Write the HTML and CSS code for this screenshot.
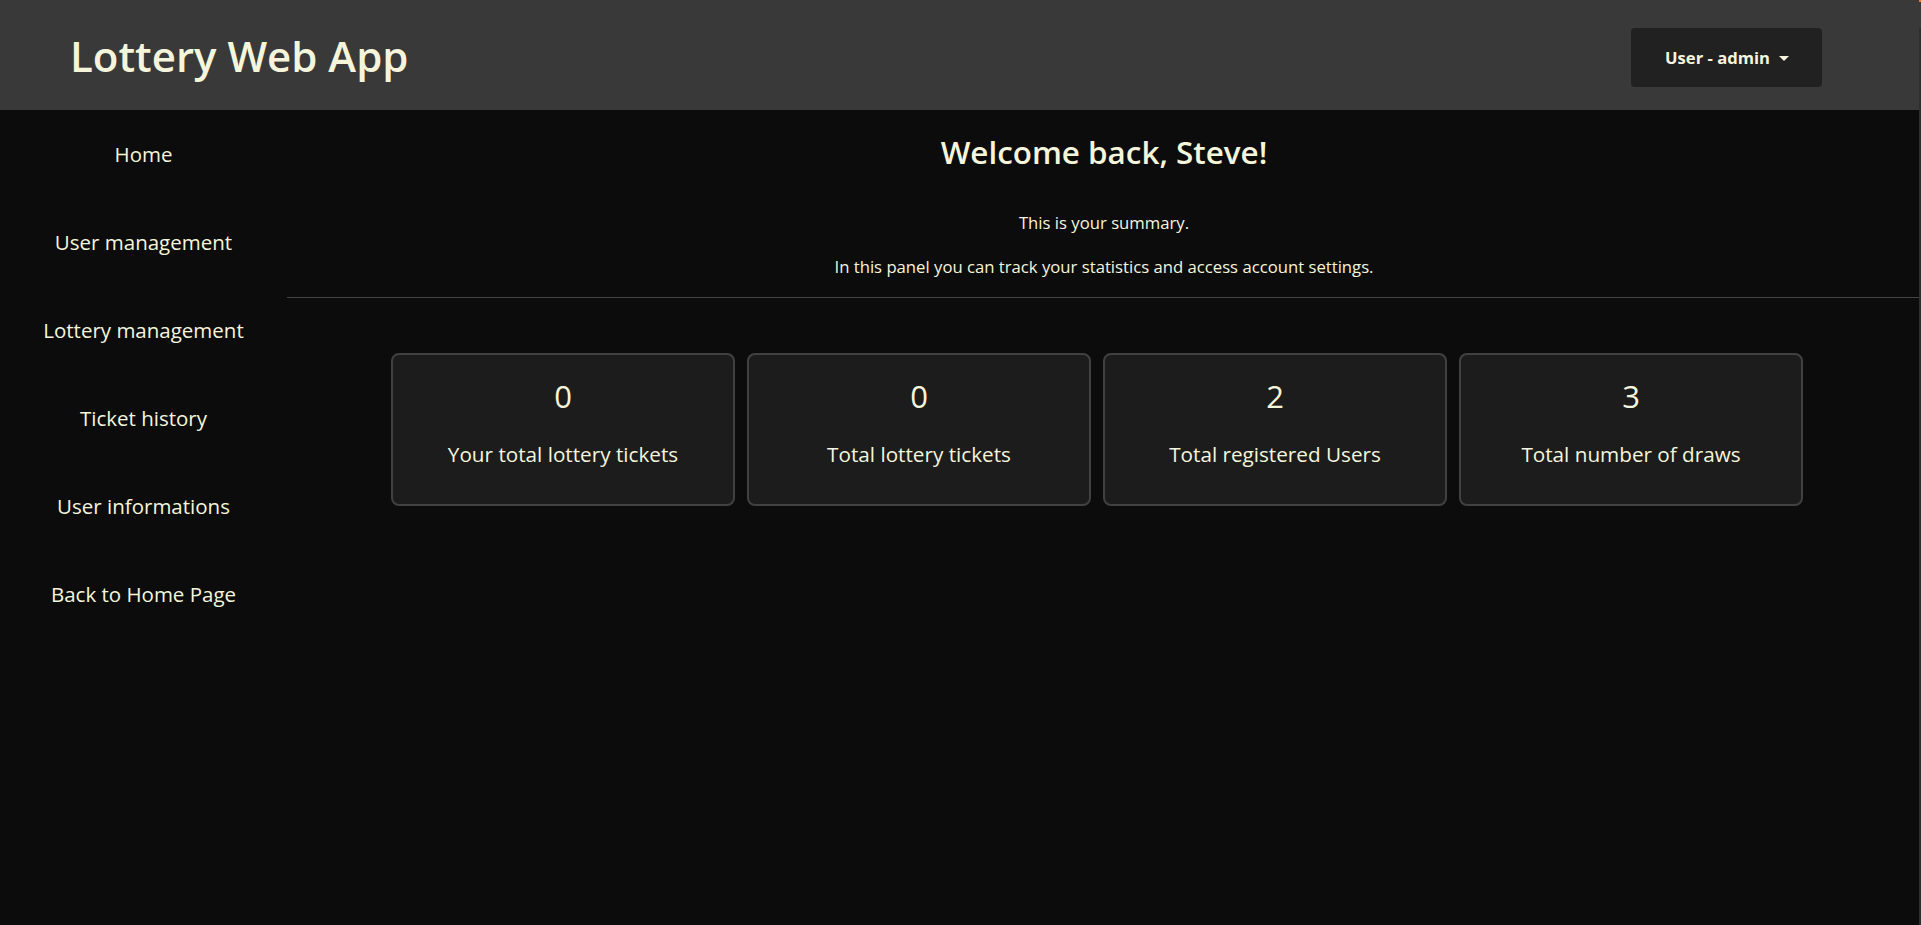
FILE: index.html
```html
<!DOCTYPE html>
<html lang="en">
<head>
<meta charset="utf-8">
<title>Lottery Web App</title>
<link rel="stylesheet" href="styles.css">
</head>
<body>
<header class="topbar">
  <h1 class="brand">Lottery Web App</h1>
  <button class="user-btn" type="button">User - admin<span class="caret"></span></button>
</header>
<div class="layout">
  <nav class="sidebar">
    <a class="nav-item" href="#">Home</a>
    <a class="nav-item" href="#">User management</a>
    <a class="nav-item" href="#">Lottery management</a>
    <a class="nav-item" href="#">Ticket history</a>
    <a class="nav-item" href="#">User informations</a>
    <a class="nav-item" href="#">Back to Home Page</a>
  </nav>
  <main class="content">
    <section class="intro">
      <h2 class="welcome">Welcome back, Steve!</h2>
      <p class="summary">This is your summary.</p>
      <p class="summary second">In this panel you can track your statistics and access account settings.</p>
    </section>
    <hr class="divider">
    <section class="cards">
      <div class="card"><div class="card-num">0</div><div class="card-label">Your total lottery tickets</div></div>
      <div class="card"><div class="card-num">0</div><div class="card-label">Total lottery tickets</div></div>
      <div class="card"><div class="card-num">2</div><div class="card-label">Total registered Users</div></div>
      <div class="card"><div class="card-num">3</div><div class="card-label">Total number of draws</div></div>
    </section>
  </main>
</div>
<div class="edge-strip"></div>
<div class="edge-mark"></div>
</body>
</html>
```
FILE: styles.css
```css
* { box-sizing: border-box; }
html, body { margin: 0; padding: 0; }
body {
  background: #0c0c0c;
  color: #f5f5dc;
  font-family: "Open Sans", "Noto Sans", sans-serif;
  min-height: 925px;
  overflow: hidden;
}
.topbar {
  height: 110px;
  background: #393939;
  display: flex;
  align-items: center;
  justify-content: space-between;
  padding: 0 99px 0 70px;
}
.brand {
  margin: 2px 0 0;
  font-size: 42px;
  font-weight: 600;
  line-height: 50px;
  color: #f5f5dc;
}
.user-btn {
  margin-top: 5px;
  width: 191px;
  height: 59px;
  background: #212121;
  border: none;
  border-radius: 4px;
  color: #f5f5dc;
  font-family: "Open Sans", "Noto Sans", sans-serif;
  font-size: 16.6px;
  font-weight: 700;
  display: flex;
  align-items: center;
  justify-content: center;
  padding: 0 0 0 1px;
}
.caret {
  display: inline-block;
  width: 0;
  height: 0;
  margin-left: 9px;
  margin-top: 2px;
  border-top: 5px solid #f5f5dc;
  border-left: 5px solid transparent;
  border-right: 5px solid transparent;
}
.layout {
  display: flex;
}
.sidebar {
  width: 287px;
  flex-shrink: 0;
  display: flex;
  flex-direction: column;
}
.nav-item {
  display: block;
  height: 88px;
  line-height: 88px;
  text-align: center;
  font-size: 20.5px;
  color: #f5f5dc;
  text-decoration: none;
}
.content {
  flex: 1;
  display: flex;
  flex-direction: column;
}
.intro {
  text-align: center;
  padding-top: 23px;
}
.welcome {
  margin: 0;
  font-size: 31.4px;
  font-weight: 600;
  line-height: 38px;
}
.summary {
  margin: 40px 0 0;
  font-size: 16.7px;
  line-height: 24px;
}
.summary.second {
  margin-top: 19.5px;
}
.divider {
  margin: 18px 0 0;
  border: none;
  border-top: 1px solid #444444;
  height: 0;
}
.cards {
  display: flex;
  gap: 12px;
  padding: 55px 0 0 104px;
}
.card {
  width: 344px;
  height: 153px;
  background: #1c1c1c;
  border: 2px solid #414141;
  border-radius: 8px;
  text-align: center;
  padding-top: 21.5px;
}
.card-num {
  font-size: 31px;
  line-height: 40px;
}
.card-label {
  margin-top: 24px;
  font-size: 20.7px;
  line-height: 28px;
}
.edge-strip {
  position: fixed;
  top: 28px;
  right: 0;
  width: 2px;
  bottom: 0;
  background: #2f2f2f;
}
.edge-mark {
  position: fixed;
  top: 0;
  right: 0;
  width: 2px;
  height: 2px;
  background: #f07a2a;
}
```
